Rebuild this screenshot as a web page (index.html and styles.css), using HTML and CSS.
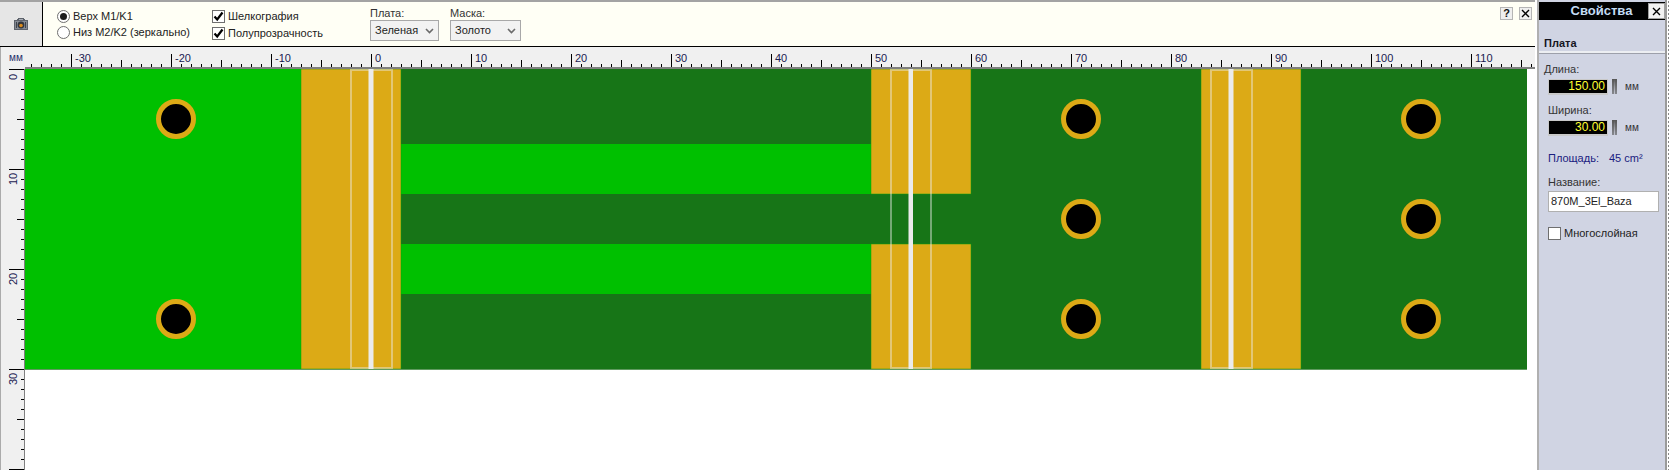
FILE: index.html
```html
<!DOCTYPE html>
<html lang="ru">
<head>
<meta charset="utf-8">
<title>Плата</title>
<link rel="stylesheet" href="styles.css">
</head>
<body>
<div class="app">
  <main class="main">
    <header class="toolbar">
      <button class="camera" type="button" aria-label="Снимок">
        <svg width="16" height="14" viewBox="0 0 16 14">
          <path d="M4 2h1V1h6v1h1v1h3v10H1V3h3z" fill="#5d626b"/>
          <rect x="2" y="4" width="12" height="8" fill="#868b94"/>
          <rect x="3" y="5" width="1" height="6" fill="#3f434b"/>
          <rect x="12" y="5" width="1" height="6" fill="#3f434b"/>
          <circle cx="8" cy="8" r="3.4" fill="#33363d"/>
          <circle cx="8" cy="8.5" r="1.8" fill="#d98a1c"/>
          <rect x="6" y="2" width="4" height="1" fill="#a9aeb6"/>
        </svg>
      </button>
      <div class="group radios">
        <label class="opt"><span class="radio on"></span>Верх M1/K1</label>
        <label class="opt"><span class="radio"></span>Низ M2/K2 (зеркально)</label>
      </div>
      <div class="group checks">
        <label class="opt"><span class="check"><svg width="11" height="11" viewBox="0 0 11 11"><path d="M1.5 5.5l2.7 3 5.3-7" class="tick"/></svg></span>Шелкография</label>
        <label class="opt"><span class="check"><svg width="11" height="11" viewBox="0 0 11 11"><path d="M1.5 5.5l2.7 3 5.3-7" class="tick"/></svg></span>Полупрозрачность</label>
      </div>
      <div class="field board-field">
        <span class="field-label">Плата:</span>
        <div class="select"><span>Зеленая</span><svg width="9" height="6" viewBox="0 0 9 6"><path d="M1 1l3.5 3.5L8 1" class="chev"/></svg></div>
      </div>
      <div class="field mask-field">
        <span class="field-label">Маска:</span>
        <div class="select"><span>Золото</span><svg width="9" height="6" viewBox="0 0 9 6"><path d="M1 1l3.5 3.5L8 1" class="chev"/></svg></div>
      </div>
      <div class="win-btns">
        <button class="win-btn" type="button">?</button>
        <button class="win-btn" type="button"><svg width="9" height="9" viewBox="0 0 9 9"><path d="M1 1l7 7M8 1L1 8" class="x"/></svg></button>
      </div>
    </header>

    <div class="work">
      <div class="corner">мм</div>
      <svg class="ruler-top" viewBox="25 47 1510 20">
        <line class="tk s" x1="31" x2="1535" y1="65.5" y2="65.5"/>
        <line class="tk m" x1="21" x2="1535" y1="63.5" y2="63.5"/>
        <line class="tk l" x1="71" x2="1535" y1="60.5" y2="60.5"/>
        <g class="rl">
          <text x="75" y="62">-30</text><text x="175" y="62">-20</text><text x="275" y="62">-10</text>
          <text x="375" y="62">0</text><text x="475" y="62">10</text><text x="575" y="62">20</text>
          <text x="675" y="62">30</text><text x="775" y="62">40</text><text x="875" y="62">50</text>
          <text x="975" y="62">60</text><text x="1075" y="62">70</text><text x="1175" y="62">80</text>
          <text x="1275" y="62">90</text><text x="1375" y="62">100</text><text x="1475" y="62">110</text>
        </g>
      </svg>
      <svg class="ruler-left" viewBox="0 69 24 401">
        <line class="tk s" x1="22.5" x2="22.5" y1="79" y2="470"/>
        <line class="tk m" x1="20.5" x2="20.5" y1="19" y2="470"/>
        <line class="tk ml" x1="16.5" x2="16.5" y1="69" y2="470"/>
        <g class="rl">
          <text transform="translate(17 80) rotate(-90)">0</text>
          <text transform="translate(17 185) rotate(-90)">10</text>
          <text transform="translate(17 285) rotate(-90)">20</text>
          <text transform="translate(17 385) rotate(-90)">30</text>
        </g>
      </svg>
      <svg class="canvas" viewBox="25 69 1510 401">
        <rect class="bright" x="25" y="69" width="1502" height="300"/>
        <rect class="dark" x="401" y="69" width="1126" height="300"/>
        <rect class="bright" x="401" y="144" width="470" height="50"/>
        <rect class="bright" x="401" y="244" width="470" height="50"/>
        <rect class="gold" x="301" y="69" width="100" height="300"/>
        <rect class="gold" x="871" y="69" width="100" height="125"/>
        <rect class="gold" x="871" y="244" width="100" height="125"/>
        <rect class="gold" x="1201" y="69" width="100" height="300"/>

        <rect class="silk" x="351" y="70" width="41" height="298"/>
        <rect class="silk" x="891" y="70" width="40" height="298"/>
        <rect class="silk" x="1211" y="70" width="41" height="298"/>
        <rect class="bar-e" x="368" y="69" width="6" height="300"/>
        <rect class="bar-e" x="908" y="69" width="5" height="300"/>
        <rect class="bar-e" x="1228" y="69" width="6" height="300"/>
        <rect class="bar" x="369" y="69" width="4" height="300"/>
        <rect class="bar" x="909" y="69" width="4" height="300"/>
        <rect class="bar" x="1229" y="69" width="4" height="300"/>

        <line class="bottom" x1="25" x2="1527" y1="369.5" y2="369.5"/>

        <g class="hole"><circle cx="176" cy="119" r="17.5"/><circle cx="176" cy="319" r="17.5"/>
          <circle cx="1081" cy="119" r="17.5"/><circle cx="1081" cy="219" r="17.5"/><circle cx="1081" cy="319" r="17.5"/>
          <circle cx="1421" cy="119" r="17.5"/><circle cx="1421" cy="219" r="17.5"/><circle cx="1421" cy="319" r="17.5"/></g>
      </svg>
    </div>
  </main>

  <aside class="panel">
    <div class="title"><span class="title-text">Свойства</span>
      <button class="title-close" type="button"><svg width="9" height="9" viewBox="0 0 9 9"><path d="M1 1l7 7M8 1L1 8" class="x"/></svg></button>
    </div>
    <div class="section">Плата</div>
    <div class="props">
      <div class="lbl first">Длина:</div>
      <div class="num-row"><div class="num">150.00</div><span class="spin"></span><span class="unit">мм</span></div>
      <div class="lbl second">Ширина:</div>
      <div class="num-row"><div class="num">30.00</div><span class="spin"></span><span class="unit">мм</span></div>
      <div class="area"><span>Площадь:</span><span>45 cm²</span></div>
      <div class="lbl name">Название:</div>
      <div class="text-in">870M_3El_Baza</div>
      <label class="opt multi"><span class="check"></span>Многослойная</label>
    </div>
  </aside>
  <div class="edge"></div>
</div>
</body>
</html>
```
FILE: styles.css
```css
* { box-sizing: border-box; }
html, body { margin: 0; padding: 0; height: 100%; overflow: hidden; background: #fff; }
body { font: 11px/13px "Liberation Sans", Arial, sans-serif; color: #222; }
button { padding: 0; font: inherit; }

.app { display: flex; width: 1669px; height: 470px; }
.main { width: 1536px; display: flex; flex-direction: column; border-right: 1px solid #fff; }

/* toolbar */
.toolbar { height: 47px; flex: none; display: flex; background: #fffff5; border-top: 2px solid #a3a3a3; border-bottom: 1px solid #000; }
.camera { width: 43px; flex: none; border: 0; border-right: 1px solid #000; background: #e6e6e6; display: flex; align-items: center; justify-content: center; }
.group { display: flex; flex-direction: column; padding-top: 7px; }
.radios { width: 155px; margin-left: 14px; gap: 2px; }
.checks { width: 158px; gap: 3px; }
.opt { display: flex; align-items: center; gap: 3px; height: 14px; white-space: nowrap; }
.radio { width: 13px; height: 13px; border-radius: 50%; border: 1px solid #6f6f6f; background: #fff; position: relative; flex: none; }
.radio.on::after { content: ""; position: absolute; inset: 2px; border-radius: 50%; background: #1c1c1c; }
.check { width: 13px; height: 13px; border: 1px solid #6f6f6f; background: #fff; display: flex; align-items: center; justify-content: center; flex: none; }
.tick { fill: none; stroke: #000; stroke-width: 2.2; }
.field { display: flex; flex-direction: column; }
.board-field { width: 80px; }
.mask-field { width: 71px; }
.field-label { height: 18px; padding-top: 5px; color: #333; }
.select { height: 21px; display: flex; align-items: center; justify-content: space-between; padding: 0 4px 0 4px; border: 1px solid #a8a8a8; background: #f2f2f2; color: #222; }
.board-field .select { width: 69px; }
.mask-field .select { width: 71px; }
.chev { fill: none; stroke: #6a6a6a; stroke-width: 1.6; }
.win-btns { margin-left: auto; display: flex; gap: 6px; padding: 5px 3px 0 0; }
.win-btn { width: 13px; height: 13px; border: 1px solid #b5b5b5; background: #efefef; font-weight: 700; line-height: 11px; color: #111; display: flex; align-items: center; justify-content: center; }
.x { fill: none; stroke: #000; stroke-width: 1.4; }

/* workspace */
.work { flex: 1; min-height: 0; display: grid; grid-template-columns: 25px 1fr; grid-template-rows: 22px 1fr; background: #f0f0f0; }
.corner { padding: 5px 0 0 8px; font-size: 10px; line-height: 12px; color: #26306a; border-left: 1px solid #ababab; }
.ruler-top { display: block; width: 1510px; height: 22px; border-bottom: 2px solid #808080; }
.ruler-left { display: block; width: 25px; height: 401px; border-right: 1px solid #808080; box-shadow: inset 1px 0 0 #ababab; }
.canvas { display: block; width: 1510px; height: 401px; background: #fff; }
.tk { stroke: #000; stroke-dasharray: 1 99; fill: none; }
.tk.s { stroke-width: 3; stroke-dasharray: 1 9; }
.tk.m { stroke-width: 7; }
.tk.l { stroke-width: 13; }
.tk.ml { stroke-width: 15; }
.rl text { font: 11px "Liberation Sans", Arial, sans-serif; fill: #1a2050; }

.bright { fill: #00c000; }
.dark { fill: #177517; }
.gold { fill: #dcaa16; stroke: #0ea00e; stroke-width: .5; }
.silk { fill: none; stroke: #ebebeb; stroke-opacity: .45; stroke-width: 2; }
.bar-e { fill: #ebebeb; fill-opacity: .5; }
.bar { fill: #ebebeb; }
.bottom { stroke: #5f9a5f; stroke-width: 1; }
.hole circle { fill: #000; stroke: #dcaa16; stroke-width: 5; }

/* properties */
.panel { width: 128px; flex: none; padding: 2px 0 0; margin-left: 1px; background: #d0d4e3; border-left: 2px solid #b0b0b0; }
.title { height: 18px; display: flex; background: #000; position: relative; padding-right: 17px; }
.title-text { flex: 1; text-align: center; color: #c4dcf4; font-size: 13px; font-weight: 700; line-height: 18px; padding-left: 16px; }
.title-close { width: 17px; height: 16px; position: absolute; top: 1px; right: 0; border: 1px solid #a0a0a0; background: #f2f2f2; display: flex; align-items: center; justify-content: center; }
.section { height: 33px; padding: 17px 0 0 5px; font-weight: 700; color: #15151f; border-bottom: 2px solid #eceef2; box-shadow: 0 1px 0 #9da0aa; }
.props { padding: 10px 5px 0 9px; }
.lbl { color: #333; }
.lbl.first { margin-left: -4px; }
.lbl.second { margin-top: 9px; }
.lbl.name { margin-top: 11px; }
.num-row { display: flex; align-items: center; margin-top: 2px; height: 17px; }
.num { width: 60px; height: 16px; background: #000; border: 1px solid #c8c8c8; border-width: 1px 1px 2px 1px; color: #ffff30; text-align: right; padding-right: 2px; font-size: 12px; line-height: 13px; }
.spin { width: 5px; height: 15px; margin: 0 8px 0 4px; background: linear-gradient(90deg, #555 0 2px, transparent 2px 3px, #555 3px 5px), linear-gradient(#555, #b8bac4); -webkit-mask: linear-gradient(#000, #0009); }
.unit { font-size: 10px; color: #333; }
.area { display: flex; gap: 10px; margin-top: 16px; color: #1a2080; }
.text-in { height: 21px; width: 111px; margin-top: 2px; padding: 3px 2px; background: #fff; border: 1px solid #b0b0b0; color: #222; }
.multi { margin-top: 14px; }
.edge { flex: 1; border-left: 2px solid #9a9a9a; background: #fff radial-gradient(circle, #888 0 1px, transparent 1px) 0 0 / 4px 4px; }
```
